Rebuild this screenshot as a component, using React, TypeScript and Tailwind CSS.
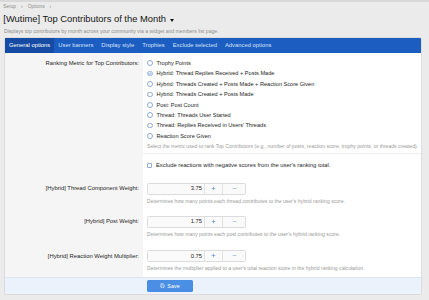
import { Plus, Minus, Save, Check } from "lucide-react";

const metrics = [
    "Trophy Points",
    "Hybrid: Thread Replies Received + Posts Made",
    "Hybrid: Threads Created + Posts Made + Reaction Score Given",
    "Hybrid: Threads Created + Posts Made",
    "Post: Post Count",
    "Thread: Threads User Started",
    "Thread: Replies Received in Users' Threads",
    "Reaction Score Given",
];

const tabs = [
    "General options",
    "User banners",
    "Display style",
    "Trophies",
    "Exclude selected",
    "Advanced options",
];

const Radio = ({ label, checked }: { label: string; checked?: boolean }) => (
    <div className="flex items-center h-[10.4px] gap-[4px]">
        <span
            className={`w-[5.5px] h-[5.5px] shrink-0 rounded-full border-[0.8px] flex items-center justify-center ${
                checked ? "border-[#9bb6dc] bg-[#dde9f8]" : "border-[#8ea8cf] bg-white"
            }`}
        >
            {checked && <Check className="w-[4px] h-[4px] text-[#4f82c8]" strokeWidth={3} />}
        </span>
        <span className="text-[5.6px] text-[#1d1d1d] whitespace-nowrap">{label}</span>
    </div>
);

const NumberBox = ({ value }: { value: string }) => (
    <div className="flex w-[99px] h-[12px] border-[0.8px] border-[#dcdcdc] rounded-[1.5px] bg-[#fafafa] text-[5.8px]">
        <div className="flex-1 flex items-center justify-end pr-[2px] text-[#1d1d1d]">{value}</div>
        <div className="w-[18px] flex items-center justify-center border-l-[0.8px] border-[#e2e2e2]">
            <Plus className="w-[5px] h-[5px] text-[#3c78d0]" strokeWidth={2.5} />
        </div>
        <div className="w-[23px] flex items-center justify-center border-l-[0.8px] border-[#e2e2e2]">
            <Minus className="w-[5px] h-[5px] text-[#7c98c4]" strokeWidth={2.5} />
        </div>
    </div>
);

const Hint = ({ children, className = "" }: { children: string; className?: string }) => (
    <div className={`text-[5.1px] leading-[6px] text-[#9a9a9a] whitespace-nowrap ${className}`}>{children}</div>
);

const WeightRow = ({
    label,
    value,
    hint,
    pt,
    pb,
}: {
    label: string;
    value: string;
    hint: string;
    pt: string;
    pb: string;
}) => (
    <div className="flex">
        <div className={`w-[138px] shrink-0 bg-[#f5f5f5] text-right pr-[4px] ${pt} ${pb}`}>
            <div className="h-[12px] flex items-center justify-end text-[5.85px] text-[#1d1d1d] whitespace-nowrap">{label}</div>
        </div>
        <div className={`flex-1 pl-[4px] ${pt} ${pb}`}>
            <NumberBox value={value} />
            <Hint className="mt-[3.4px]">{hint}</Hint>
        </div>
    </div>
);

export default function App() {
    return (
        <div
            className="w-[429px] h-[300px] overflow-hidden bg-[#ebebeb] relative"
            style={{ fontFamily: '"Liberation Sans", Arial, sans-serif' }}
        >
            <div className="h-[2px] bg-[#d9d9d9]" />
            <div className="px-[4px]">
                <div className="h-[9px] flex items-center gap-[5px] text-[4.9px] text-[#8d8d8d] mt-[0.5px] -ml-[0.7px]">
                    <span>Setup</span>
                    <span>›</span>
                    <span>Options</span>
                    <span>›</span>
                </div>
                <div className="h-[16px] flex items-center gap-[3.5px] text-[9.4px] text-[#141414] -ml-[0.7px]">
                    <span className="whitespace-nowrap">[Wutime] Top Contributors of the Month</span>
                    <span className="w-0 h-0 border-l-[2.3px] border-r-[2.3px] border-t-[3px] border-l-transparent border-r-transparent border-t-[#141414] mt-[1px]" />
                </div>
                <div className="h-[9px] flex items-center text-[5.1px] text-[#8d8d8d] whitespace-nowrap">
                    Displays top contributors by month across your community via a widget and members list page.
                </div>

                <div className="mt-[0.5px] w-[418px] rounded-[2px] overflow-hidden border-[0.5px] border-[#dcdcdc]">
                    <div className="h-[15px] bg-[#1c5dc2] flex items-stretch text-[5.85px] text-[#d3e2f8]">
                        {tabs.map((t, i) => (
                            <div
                                key={t}
                                className={`flex items-center px-[4px] whitespace-nowrap ${
                                    i === 0 ? "bg-[#154ba3] text-white" : ""
                                }`}
                            >
                                {t}
                            </div>
                        ))}
                    </div>

                    <div className="flex">
                        <div className="w-[138px] shrink-0 bg-[#f5f5f5] pt-[5px] pr-[4px]">
                            <div className="h-[10.4px] flex items-center justify-end text-[5.85px] text-[#1d1d1d] whitespace-nowrap">
                                Ranking Metric for Top Contributors:
                            </div>
                        </div>
                        <div className="flex-1 bg-white pl-[4px] pt-[5px] pb-[4px]">
                            {metrics.map((m, i) => (
                                <Radio key={m} label={m} checked={i === 1} />
                            ))}
                            <Hint className="mt-[1.7px]">
                                Select the metric used to rank Top Contributors (e.g., number of posts, reaction score, trophy points, or threads created).
                            </Hint>
                        </div>
                    </div>

                    <div className="flex">
                        <div className="w-[138px] shrink-0 bg-[#f5f5f5]" />
                        <div className="flex-1 bg-white pl-[4px] pt-[6px] pb-[5px] border-t-[0.5px] border-[#f0f0f0]">
                            <div className="flex items-center h-[10.4px] gap-[4px]">
                                <span className="w-[5px] h-[5px] shrink-0 rounded-[1px] border-[0.8px] border-[#8ea8cf] bg-white" />
                                <span className="text-[5.8px] text-[#1d1d1d] whitespace-nowrap">
                                    Exclude reactions with negative scores from the user's ranking total.
                                </span>
                            </div>
                        </div>
                    </div>

                    <div className="bg-white">
                        <WeightRow
                            label="[Hybrid] Thread Component Weight:"
                            value="3.75"
                            hint="Determines how many points each thread contributes to the user's hybrid ranking score."
                            pt="pt-[7.5px]"
                            pb="pb-[5.5px]"
                        />
                        <WeightRow
                            label="[Hybrid] Post Weight:"
                            value="1.75"
                            hint="Determines how many points each post contributes to the user's hybrid ranking score."
                            pt="pt-[6px]"
                            pb="pb-[6.5px]"
                        />
                        <WeightRow
                            label="[Hybrid] Reaction Weight Multiplier:"
                            value="0.75"
                            hint="Determines the multiplier applied to a user's total reaction score in the hybrid ranking calculation."
                            pt="pt-[6.5px]"
                            pb="pb-[5.5px]"
                        />
                    </div>

                    <div className="h-[17px] bg-[#ecf2fb] border-t-[0.5px] border-[#dbe5f3] flex items-center pl-[142px]">
                        <button className="w-[46px] h-[11.5px] rounded-[1.5px] bg-[#4a8fe3] text-white text-[5.4px] flex items-center justify-center gap-[2px]">
                            <Save className="w-[5px] h-[5px]" strokeWidth={2} />
                            Save
                        </button>
                    </div>
                </div>
            </div>
        </div>
    );
}
